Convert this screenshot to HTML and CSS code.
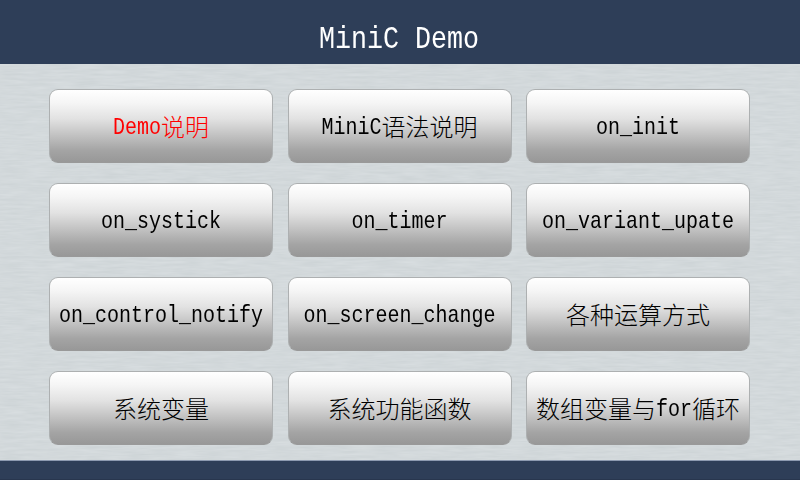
FILE: index.html
```html
<!DOCTYPE html>
<html lang="zh-CN">
<head>
<meta charset="utf-8">
<title>MiniC Demo</title>
<link rel="stylesheet" href="styles.css">
</head>
<body>
<div class="screen">
  <header class="bar"><h1><span class="mono">MiniC Demo</span></h1></header>
  <main class="panel">
    <svg class="texture" width="800" height="396" aria-hidden="true">
      <filter id="brushed" x="0" y="0" width="100%" height="100%" color-interpolation-filters="sRGB">
        <feTurbulence type="fractalNoise" baseFrequency="0.04 0.4" numOctaves="3" seed="4"/>
        <feColorMatrix values="0.055 0 0 0 0.798  0.05 0 0 0 0.824  0.05 0 0 0 0.834  0 0 0 0 1"/>
      </filter>
      <rect width="800" height="396" filter="url(#brushed)"/>
    </svg>
    <nav class="grid">
      <button class="key active"><span class="mono">Demo</span>说明</button>
      <button class="key"><span class="mono">MiniC</span>语法说明</button>
      <button class="key"><span class="mono">on_init</span></button>
      <button class="key"><span class="mono">on_systick</span></button>
      <button class="key"><span class="mono">on_timer</span></button>
      <button class="key"><span class="mono">on_variant_upate</span></button>
      <button class="key"><span class="mono">on_control_notify</span></button>
      <button class="key"><span class="mono">on_screen_change</span></button>
      <button class="key">各种运算方式</button>
      <button class="key">系统变量</button>
      <button class="key">系统功能函数</button>
      <button class="key">数组变量与<span class="mono">for</span>循环</button>
    </nav>
  </main>
  <footer class="foot"></footer>
</div>
</body>
</html>
```
FILE: styles.css
```css
* { box-sizing: border-box; }
body { margin: 0; }
.screen {
  width: 800px;
  height: 480px;
  display: flex;
  flex-direction: column;
  overflow: hidden;
  background: #2e3e58;
}
.bar {
  height: 64px;
  padding-top: 15px;
  background: #2e3e58;
  color: #fff;
  text-align: center;
}
h1 {
  margin: 0;
  padding-right: 2px;
  font: 400 26.67px/50px "Liberation Mono", monospace;
}
.mono {
  display: inline-block;
  font-family: "Liberation Mono", monospace;
  transform: scaleY(1.2);
}
.panel {
  position: relative;
  height: 396px;
  padding: 25px 0 0 49px;
  background: #d3d9db;
}
.texture {
  position: absolute;
  inset: 0;
}
.grid {
  position: relative;
  display: grid;
  grid-template-columns: repeat(3, 224px);
  grid-auto-rows: 74px;
  gap: 20px 14.5px;
}
.key {
  display: flex;
  align-items: center;
  justify-content: center;
  padding: 0;
  border: 1px solid #adb0b1;
  border-bottom-color: #999;
  border-radius: 9px;
  background: linear-gradient(#fff 0%, #f5f5f5 18%, #e2e2e2 40%, #c3c3c3 62%, #a4a4a4 84%, #989898 100%);
  color: #000;
  font: 300 24px/30px "Noto Sans CJK SC", sans-serif;
  white-space: nowrap;
}
.key .mono {
  padding-top: 4px;
  font-size: 20px;
}
.key.active { color: #f00; }
.foot {
  height: 20px;
  border-top: 1px solid #8d9ab0;
  border-bottom: 1px solid #28364e;
  background: #2e3e58;
}
```
